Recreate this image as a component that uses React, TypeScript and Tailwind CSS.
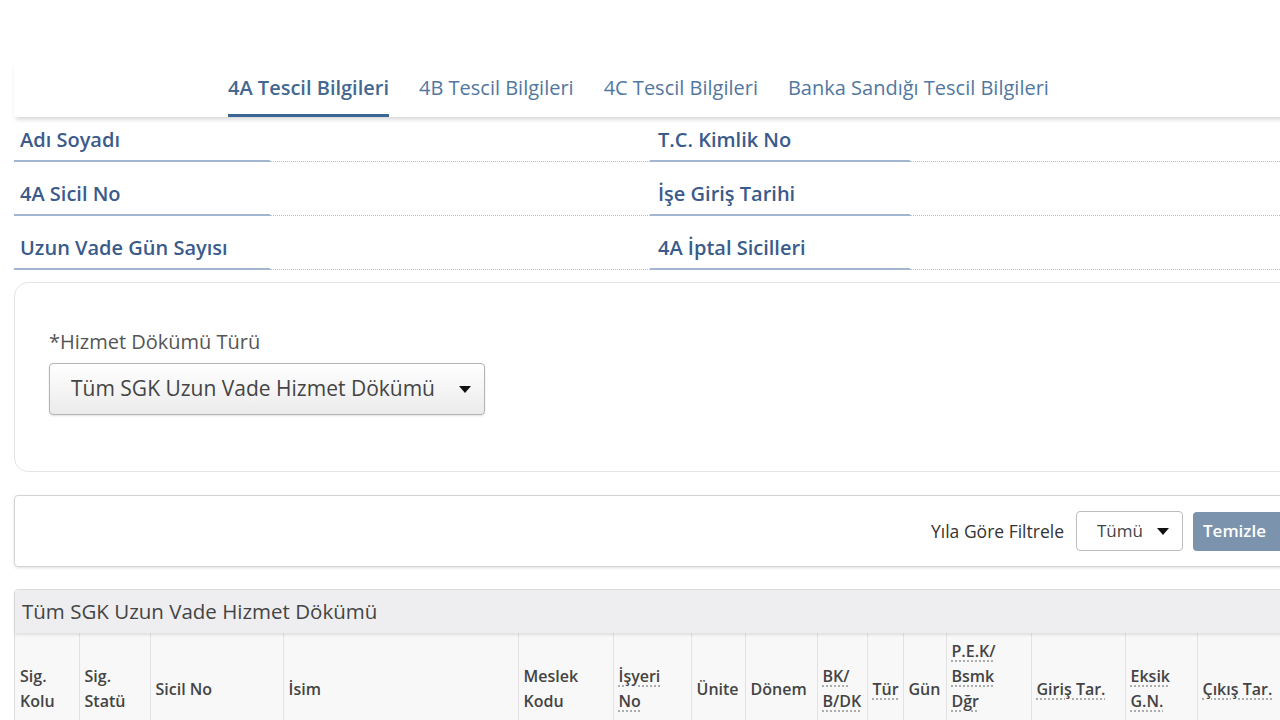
import React from 'react';

const tabs = [
  { id: '4a', label: '4A Tescil Bilgileri', active: true },
  { id: '4b', label: '4B Tescil Bilgileri' },
  { id: '4c', label: '4C Tescil Bilgileri' },
  { id: 'banka', label: 'Banka Sandığı Tescil Bilgileri' },
];

const infoRows = [
  { left: 'Adı Soyadı', right: 'T.C. Kimlik No', h: 'h-[45px]' },
  { left: '4A Sicil No', right: 'İşe Giriş Tarihi', h: 'h-[54px]' },
  { left: 'Uzun Vade Gün Sayısı', right: '4A İptal Sicilleri', h: 'h-[54px]' },
];

// column widths taken from the header row
const columns: { w: string; lines: string[]; abbr?: boolean; top?: boolean }[] = [
  { w: 'w-[64px]', lines: ['Sig.', 'Kolu'] },
  { w: 'w-[71px]', lines: ['Sig.', 'Statü'] },
  { w: 'w-[133px]', lines: ['Sicil No'] },
  { w: 'w-[235px]', lines: ['İsim'] },
  { w: 'w-[95px]', lines: ['Meslek', 'Kodu'] },
  { w: 'w-[78px]', lines: ['İşyeri', 'No'], abbr: true },
  { w: 'w-[54px]', lines: ['Ünite'] },
  { w: 'w-[72px]', lines: ['Dönem'] },
  { w: 'w-[50px]', lines: ['BK/', 'B/DK'], abbr: true },
  { w: 'w-[36px]', lines: ['Tür'], abbr: true },
  { w: 'w-[43px]', lines: ['Gün'] },
  { w: 'w-[85px]', lines: ['P.E.K/', 'Bsmk', 'Dğr'], abbr: true, top: true },
  { w: 'w-[94px]', lines: ['Giriş Tar.'], abbr: true },
  { w: 'w-[72px]', lines: ['Eksik', 'G.N.'], abbr: true },
  { w: 'w-[98px]', lines: ['Çıkış Tar.'], abbr: true },
];

const Caret = () => (
  <span className="inline-block w-0 h-0 border-l-[6px] border-r-[6px] border-t-[7px] border-l-transparent border-r-transparent border-t-[#111]"></span>
);

export default function App() {
  return (
    <div className="w-[1280px] h-[720px] overflow-hidden bg-white font-['Open_Sans','Liberation_Sans',sans-serif]">
      <div className="h-[60px]"></div>

      {/* Tabs */}
      <div className="relative z-10 ml-[14px] w-[1290px] h-[57px] flex items-end pl-[214px] gap-[30px] bg-white shadow-[0_4px_5px_-2px_rgba(0,0,0,0.18)]">
        {tabs.map((tab) => (
          <div
            key={tab.id}
            className={`text-[20px] leading-[28px] pb-[12px] border-b-[3px] whitespace-nowrap ${
              tab.active
                ? 'font-semibold text-[#44688f] border-[#3b6592]'
                : 'text-[#5277a0] border-transparent'
            }`}
          >
            {tab.label}
          </div>
        ))}
      </div>

      {/* Tescil info */}
      <div className="ml-[14px] w-[1290px] grid grid-cols-[256px_380px_260px_1fr]">
        {infoRows.map((row) => (
          <React.Fragment key={row.left}>
            <div className={`${row.h} flex items-end pl-[6px] pb-[5px] border-b-2 border-[#a2b6d0] text-[20px] leading-[30px] font-semibold text-[#3b5b8b]`}>
              {row.left}
            </div>
            <div className={`${row.h} border-b border-dotted border-[#b4c0cf]`}></div>
            <div className={`${row.h} flex items-end pl-[8px] pb-[5px] border-b-2 border-[#a2b6d0] text-[20px] leading-[30px] font-semibold text-[#3b5b8b]`}>
              {row.right}
            </div>
            <div className={`${row.h} border-b border-dotted border-[#b4c0cf]`}></div>
          </React.Fragment>
        ))}
      </div>

      {/* Hizmet dökümü türü */}
      <div className="mt-[12px] ml-[14px] w-[1290px] h-[190px] rounded-[14px] border border-[#e4e4e4] pl-[34px] pt-[46px]">
        <div className="text-[20px] leading-[26px] text-[#555]">*Hizmet Dökümü Türü</div>
        <div className="mt-[8px] w-[436px] h-[52px] rounded-[4px] border border-[#b3b3b3] bg-gradient-to-b from-white to-[#ebebeb] shadow-[0_1px_2px_rgba(0,0,0,0.12)] flex items-center justify-between pl-[21px] pr-[13px] text-[21px] text-[#444]">
          <span>Tüm SGK Uzun Vade Hizmet Dökümü</span>
          <Caret />
        </div>
      </div>

      {/* Filtre */}
      <div className="mt-[23px] ml-[14px] w-[1280px] h-[72px] rounded-[4px] border border-[#d3d3d3] shadow-[0_1px_3px_rgba(0,0,0,0.12)] flex items-center justify-end pr-[10px]">
        <span className="text-[17.5px] text-[#333] mr-[12px]">Yıla Göre Filtrele</span>
        <div className="w-[107px] h-[40px] rounded-[4px] border border-[#bdbdbd] flex items-center justify-between pl-[20px] pr-[13px] text-[17px] text-[#444]">
          <span>Tümü</span>
          <Caret />
        </div>
        <button className="ml-[10px] w-[90px] h-[39px] rounded-[4px] bg-[#7b93ad] text-white font-semibold text-[17px] text-left pl-[10px]">
          Temizle
        </button>
      </div>

      {/* Sonuç tablosu */}
      <div className="mt-[22px] ml-[14px] w-[1280px] rounded-t-[4px] border border-[#dcdcdc]">
        <div className="relative z-10 h-[43px] bg-[#eeeef0] flex items-center pl-[7px] text-[20.5px] text-[#444] shadow-[0_2px_3px_rgba(0,0,0,0.1)]">
          Tüm SGK Uzun Vade Hizmet Dökümü
        </div>
        <table className="table-fixed w-full border-collapse bg-[#f8f8f8]">
          <thead>
            <tr>
              {columns.map((col) => (
                <th
                  key={col.lines.join(' ')}
                  className={`${col.w} h-[112px] border-r border-[#e2e2e2] px-[5px] text-left text-[16px] leading-[25px] font-semibold text-[#444] whitespace-nowrap ${
                    col.top ? 'align-top pt-[6px]' : 'align-middle'
                  }`}
                >
                  {col.lines.map((line, i) => (
                    <React.Fragment key={line}>
                      {i > 0 && <br />}
                      <span className={col.abbr ? 'underline decoration-dotted decoration-[#9a9a9a] underline-offset-[4px]' : ''}>
                        {line}
                      </span>
                    </React.Fragment>
                  ))}
                </th>
              ))}
            </tr>
          </thead>
        </table>
      </div>
    </div>
  );
}
